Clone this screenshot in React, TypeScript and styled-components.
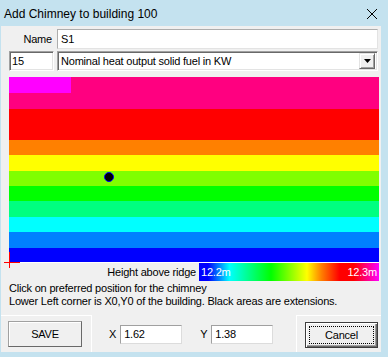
import React from "react";
import styled, { createGlobalStyle } from "styled-components";

const bands = [
	{ color: "#FF0080", height: 32 },
	{ color: "#FF0000", height: 31 },
	{ color: "#FF8000", height: 15 },
	{ color: "#FFFF00", height: 16 },
	{ color: "#80FF00", height: 15 },
	{ color: "#00FF00", height: 15 },
	{ color: "#00FF80", height: 16 },
	{ color: "#00FFFF", height: 15 },
	{ color: "#0080FF", height: 16 },
	{ color: "#0000FF", height: 14 },
];

const GlobalStyle = createGlobalStyle`
	html, body {
		margin: 0;
		padding: 0;
		background: #fff;
	}
	body {
		font-family: "Liberation Sans", Arial, sans-serif;
	}
`;

const AddChimneyDialog: React.FC = () => {
	return (
		<>
			<GlobalStyle />
			<Window>
				<TitleBar>
					<Caption>Add Chimney to building 100</Caption>
					<CloseIcon width="14" height="14" viewBox="0 0 14 14">
						<path d="M2 2 L12 12 M12 2 L2 12" stroke="#000" strokeWidth="1" fill="none" />
					</CloseIcon>
				</TitleBar>
				<Client>
					<NameRow>
						<FieldLabel>Name</FieldLabel>
						<FlatEdit style={{ width: 321 }}>S1</FlatEdit>
					</NameRow>
					<ParamRow>
						<SunkenEdit>15</SunkenEdit>
						<Combo>
							<ComboText>Nominal heat output solid fuel in KW</ComboText>
							<ComboButton>
								<svg width="7" height="4" viewBox="0 0 7 4">
									<path d="M0 0 H7 L3.5 4 Z" fill="#000" />
								</svg>
							</ComboButton>
						</Combo>
					</ParamRow>
					<Roof>
						{bands.map((b, i) => (
							<Band key={i} $color={b.color} $h={b.height} />
						))}
						<Extension />
						<ChimneyDot />
						<OriginCross />
					</Roof>
					<LegendRow>
						<LegendLabel>Height above ridge</LegendLabel>
						<LegendBar>
							<span>12.2m</span>
							<span>12.3m</span>
						</LegendBar>
					</LegendRow>
					<Notes>
						<div>Click on preferred position for the chimney</div>
						<div>Lower Left corner is X0,Y0 of the building. Black areas are extensions.</div>
					</Notes>
					<BottomBar>
						<LeftPanel>
							<Button>SAVE</Button>
						</LeftPanel>
						<MiddlePanel>
							<CoordLabel>X</CoordLabel>
							<CoordEdit>1.62</CoordEdit>
							<CoordLabel style={{ marginLeft: 18 }}>Y</CoordLabel>
							<CoordEdit>1.38</CoordEdit>
						</MiddlePanel>
						<RightPanel>
							<DefaultButton>
								<FocusRing>Cancel</FocusRing>
							</DefaultButton>
						</RightPanel>
					</BottomBar>
				</Client>
			</Window>
		</>
	);
};

const Window = styled.div`
	width: 388px;
	height: 357px;
	box-sizing: border-box;
	background: #c4e2ef;
	display: flex;
	flex-direction: column;
	font-size: 11px;
	letter-spacing: -0.2px;
	color: #000;
`;
const TitleBar = styled.div`
	height: 26px;
	display: flex;
	align-items: center;
	justify-content: space-between;
	padding: 0 9px 0 4px;
`;
const Caption = styled.div`
	font-size: 12px;
	letter-spacing: 0;
	padding-top: 1px;
`;
const CloseIcon = styled.svg`
	display: block;
	margin-top: 1px;
`;
const Client = styled.div`
	width: 380px;
	height: 326px;
	margin-left: 1px;
	background: #f0f0f0;
	display: flex;
	flex-direction: column;
`;
const NameRow = styled.div`
	display: flex;
	align-items: center;
	margin-top: 3px;
	height: 20px;
`;
const FieldLabel = styled.div`
	width: 56px;
	box-sizing: border-box;
	padding-right: 5px;
	text-align: right;
`;
const FlatEdit = styled.div`
	height: 20px;
	box-sizing: border-box;
	background: #fff;
	border: 1px solid;
	border-color: #adadad #e3e3e3 #e3e3e3 #adadad;
	padding: 0 3px;
	display: flex;
	align-items: center;
`;
const ParamRow = styled.div`
	display: flex;
	gap: 3px;
	margin-top: 2px;
	padding-left: 8px;
	height: 20px;
`;
const SunkenEdit = styled.div`
	width: 45px;
	height: 20px;
	box-sizing: border-box;
	background: #fff;
	border: 1px solid;
	border-color: #a0a0a0 #fff #fff #a0a0a0;
	box-shadow: inset 1px 1px 0 #696969, inset -1px -1px 0 #e3e3e3;
	padding: 0 2px;
	display: flex;
	align-items: center;
`;
const Combo = styled(SunkenEdit)`
	width: 321px;
	justify-content: space-between;
	padding: 0 2px 0 3px;
`;
const ComboText = styled.span``;
const ComboButton = styled.div`
	width: 16px;
	height: 16px;
	box-sizing: border-box;
	background: #f0f0f0;
	border: 1px solid;
	border-color: #e3e3e3 #696969 #696969 #e3e3e3;
	box-shadow: inset 1px 1px 0 #fff, inset -1px -1px 0 #a0a0a0;
	display: flex;
	align-items: center;
	justify-content: center;
`;
const Roof = styled.div`
	position: relative;
	margin: 6px 0 0 8px;
	width: 370px;
	height: 186px;
	background: #fff;
	display: flex;
	flex-direction: column;
`;
const Band = styled.div<{ $color: string; $h: number }>`
	height: ${(p) => p.$h}px;
	background: ${(p) => p.$color};
	flex: none;
`;
const Extension = styled.div`
	position: absolute;
	left: 0;
	top: 0;
	width: 62px;
	height: 16px;
	background: #ff00ff;
`;
const ChimneyDot = styled.div`
	position: absolute;
	left: 95px;
	top: 95px;
	width: 10px;
	height: 10px;
	box-sizing: border-box;
	border-radius: 50%;
	background: #000;
	border: 1px solid #0000ff;
`;
const OriginCross = styled.div`
	position: absolute;
	left: -5px;
	top: 175px;
	width: 16px;
	height: 16px;
	&::before {
		content: "";
		position: absolute;
		left: 0;
		top: 10px;
		width: 16px;
		height: 1px;
		background: #ff0000;
	}
	&::after {
		content: "";
		position: absolute;
		left: 5px;
		top: 0;
		width: 1px;
		height: 16px;
		background: #ff0000;
	}
`;
const LegendRow = styled.div`
	display: flex;
	justify-content: flex-end;
	align-items: center;
	gap: 3px;
	height: 18px;
	padding-right: 2px;
`;
const LegendLabel = styled.div``;
const LegendBar = styled.div`
	width: 180px;
	height: 18px;
	box-sizing: border-box;
	padding: 0 2px;
	display: flex;
	align-items: center;
	justify-content: space-between;
	color: #fff;
	background: linear-gradient(
		to right,
		#0000ff 0%,
		#0000ff 5%,
		#00ffff 17%,
		#00ff00 40%,
		#ffff00 60%,
		#ff8000 68%,
		#ff0000 78%,
		#ff0000 86%,
		#ff00ff 100%
	);
`;
const Notes = styled.div`
	margin-top: 1px;
	padding-left: 8px;
	line-height: 13px;
`;
const BottomBar = styled.div`
	margin-top: auto;
	height: 37px;
	display: flex;
`;
const LeftPanel = styled.div`
	width: 91px;
	box-sizing: border-box;
	border-top: 1px solid #fff;
	border-right: 1px solid #fff;
	padding: 5px 0 0 7px;
`;
const MiddlePanel = styled.div`
	flex: 1;
	display: flex;
	align-items: center;
	padding-left: 17px;
	padding-top: 1px;
`;
const RightPanel = styled.div`
	width: 85px;
	box-sizing: border-box;
	border-top: 1px solid #fff;
	border-left: 1px solid #fff;
	padding: 6px 0 0 8px;
`;
const CoordLabel = styled.span`
	margin-right: 4px;
`;
const CoordEdit = styled(FlatEdit)`
	width: 62px;
	height: 19px;
	border-color: #a0a0a0 #dcdcdc #dcdcdc #a0a0a0;
`;
const Button = styled.div`
	width: 74px;
	height: 26px;
	box-sizing: border-box;
	background: #f0f0f0;
	border: 1px solid;
	border-color: #a0a0a0 #696969 #696969 #a0a0a0;
	box-shadow: inset 1px 1px 0 #fff;
	display: flex;
	align-items: center;
	justify-content: center;
`;
const DefaultButton = styled(Button)`
	width: 73px;
	border-color: #3c3c3c;
	box-shadow: inset 1px 1px 0 #fff, inset -1px -1px 0 #696969, inset -2px -2px 0 #a0a0a0;
	padding: 3px;
`;
const FocusRing = styled.div`
	flex: 1;
	align-self: stretch;
	border: 1px dotted #000;
	display: flex;
	align-items: center;
	justify-content: center;
`;

export default AddChimneyDialog;
